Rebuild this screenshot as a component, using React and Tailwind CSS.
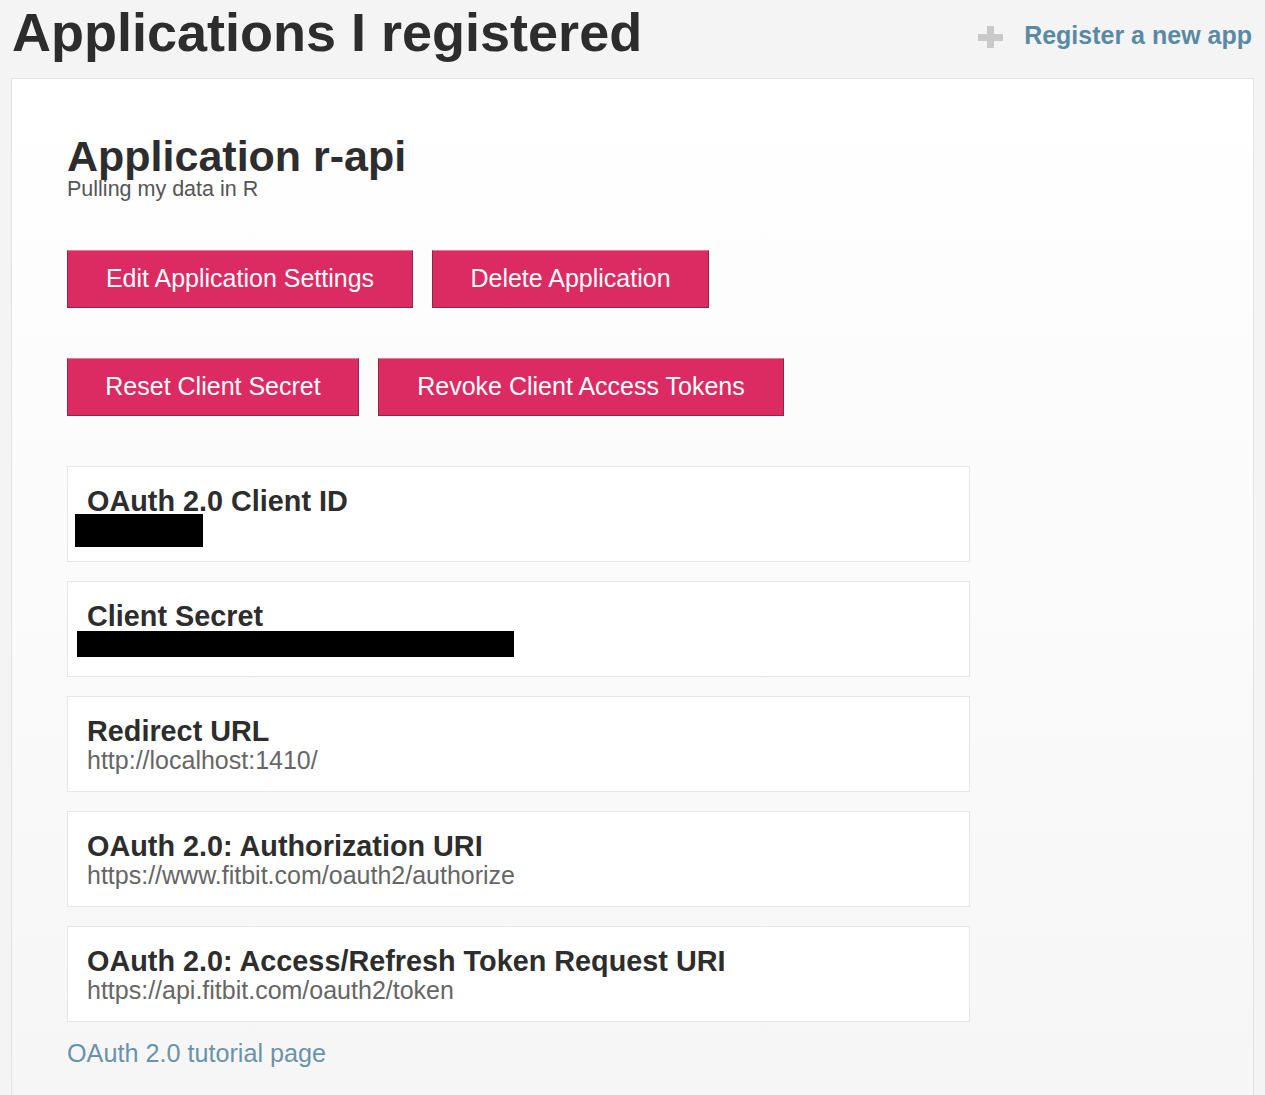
const font = { fontFamily: '"Liberation Sans", Arial, sans-serif' }

const fields = [
  { label: 'OAuth 2.0 Client ID', redact: 'w-[128px] h-[33px] -ml-3 -mt-[3px]' },
  { label: 'Client Secret', redact: 'w-[437px] h-[26px] -ml-[10px] -mt-[1px]' },
  { label: 'Redirect URL', value: 'http://localhost:1410/' },
  { label: 'OAuth 2.0: Authorization URI', value: 'https://www.fitbit.com/oauth2/authorize' },
  { label: 'OAuth 2.0: Access/Refresh Token Request URI', value: 'https://api.fitbit.com/oauth2/token' },
]

function PinkButton({ children, className = '' }) {
  return (
    <button
      className={`h-[58px] bg-[#dc2b62] text-white text-[25px] border border-[#8f2848] border-t-[#e9799b] ${className}`}
    >
      {children}
    </button>
  )
}

export default function App() {
  return (
    <div className="min-h-[1095px] bg-[#f4f4f4] overflow-hidden" style={font}>
      {/* Header */}
      <div className="flex items-start justify-between pl-[12px] pr-[13px]">
        <h1 className="text-[54px] leading-[64px] font-bold text-[#2d2d2d]">
          Applications I registered
        </h1>
        <a className="flex items-center gap-[21px] mt-[17px] text-[25px] font-bold text-[#5a89a4]">
          <span className="relative w-[25px] h-[22px] mt-[2px]">
            <span className="absolute left-0 top-[8px] w-[25px] h-[7px] bg-[#c9c9c9]" />
            <span className="absolute left-[9px] top-0 w-[7px] h-[22px] bg-[#c9c9c9]" />
          </span>
          Register a new app
        </a>
      </div>

      {/* Panel */}
      <div className="mx-[11px] mt-[14px] border border-[#e3e3e3] bg-gradient-to-b from-white to-[#f6f6f6] px-[55px] pt-[55px] pb-[30px] min-h-[1020px]">
        <h2 className="text-[43px] leading-[44px] font-bold text-[#2d2d2d]">Application r-api</h2>
        <p className="text-[21.5px] leading-[22px] text-[#555] mt-0">Pulling my data in R</p>

        <div className="flex gap-[19px] mt-[50px]">
          <PinkButton className="w-[346px]">Edit Application Settings</PinkButton>
          <PinkButton className="w-[277px]">Delete Application</PinkButton>
        </div>
        <div className="flex gap-[19px] mt-[50px]">
          <PinkButton className="w-[292px]">Reset Client Secret</PinkButton>
          <PinkButton className="w-[406px]">Revoke Client Access Tokens</PinkButton>
        </div>

        <div className="flex flex-col gap-[19px] mt-[50px] w-[903px]">
          {fields.map(f => (
            <div key={f.label} className="h-[96px] bg-white border border-[#e6e6e6] px-[19px] pt-[18px]">
              <div className="text-[28.8px] leading-[32px] font-bold text-[#2d2d2d]">{f.label}</div>
              {f.redact ? (
                <div className={`bg-black ${f.redact}`} />
              ) : (
                <div className="text-[25px] leading-[27px] text-[#666]">{f.value}</div>
              )}
            </div>
          ))}
        </div>

        <a className="block mt-[16px] text-[25.2px] leading-[30px] text-[#6a93ab]">OAuth 2.0 tutorial page</a>
      </div>
    </div>
  )
}
